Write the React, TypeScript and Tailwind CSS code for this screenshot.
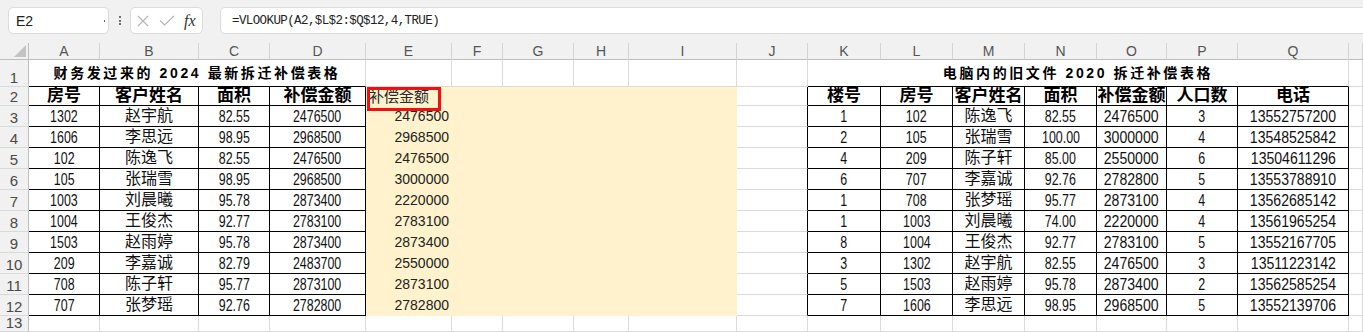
import React from 'react';

const left: string[][] = [
  ['1302', '赵宇航', '82.55', '2476500', '2476500'],
  ['1606', '李思远', '98.95', '2968500', '2968500'],
  ['102', '陈逸飞', '82.55', '2476500', '2476500'],
  ['105', '张瑞雪', '98.95', '2968500', '3000000'],
  ['1003', '刘晨曦', '95.78', '2873400', '2220000'],
  ['1004', '王俊杰', '92.77', '2783100', '2783100'],
  ['1503', '赵雨婷', '95.78', '2873400', '2873400'],
  ['209', '李嘉诚', '82.79', '2483700', '2550000'],
  ['708', '陈子轩', '95.77', '2873100', '2873100'],
  ['707', '张梦瑶', '92.76', '2782800', '2782800'],
];

const right: string[][] = [
  ['1', '102', '陈逸飞', '82.55', '2476500', '3', '13552757200'],
  ['2', '105', '张瑞雪', '100.00', '3000000', '4', '13548525842'],
  ['4', '209', '陈子轩', '85.00', '2550000', '6', '13504611296'],
  ['6', '707', '李嘉诚', '92.76', '2782800', '5', '13553788910'],
  ['1', '708', '张梦瑶', '95.77', '2873100', '4', '13562685142'],
  ['1', '1003', '刘晨曦', '74.00', '2220000', '4', '13561965254'],
  ['8', '1004', '王俊杰', '92.77', '2783100', '5', '13552167705'],
  ['3', '1302', '赵宇航', '82.55', '2476500', '3', '13511223142'],
  ['5', '1503', '赵雨婷', '95.78', '2873400', '2', '13562585254'],
  ['7', '1606', '李思远', '98.95', '2968500', '5', '13552139706'],
];

const letters = ['A', 'B', 'C', 'D', 'E', 'F', 'G', 'H', 'I', 'J', 'K', 'L', 'M', 'N', 'O', 'P', 'Q', ''];

const BR: Record<string, string> = { k: 'border-r-black', g: 'border-r-[#dadada]', y: 'border-r-[#fff2cc]' };
const BB: Record<string, string> = { k: 'border-b-black', g: 'border-b-[#dadada]', y: 'border-b-[#fff2cc]' };

function NumN({ v }: { v: string }) {
  return (
    <span className="inline-block scale-x-[0.73] font-['Liberation_Sans',Arial,sans-serif] text-[17px] leading-[17px] text-[#111]">
      {v}
    </span>
  );
}
function NumW({ v }: { v: string }) {
  return (
    <span className="inline-block scale-x-[0.88] font-['Liberation_Sans',Arial,sans-serif] text-[16px] leading-[17px] text-[#111]">
      {v}
    </span>
  );
}
function Name({ v }: { v: string }) {
  return (
    <span className="inline-block font-['Liberation_Sans','Noto_Sans_CJK_SC',sans-serif] text-[16px] leading-[18px] text-[#111]">
      {v}
    </span>
  );
}
function Head({ v }: { v: string }) {
  return (
    <span className="inline-block font-['Liberation_Sans','Noto_Sans_CJK_SC',sans-serif] font-bold text-[17px] leading-[18px] text-black">
      {v}
    </span>
  );
}

function cellBorders(r: number, c: number): [string, string, string] {
  if (r >= 2 && r <= 12) {
    if (c <= 4) return ['k', 'k', ''];
    if (c >= 5 && c <= 9) return ['y', 'y', 'bg-[#fff2cc]'];
    if (c === 10) return ['k', 'g', ''];
    if (c >= 11 && c <= 17) return ['k', 'k', ''];
    return ['g', 'g', ''];
  }
  return ['g', 'g', ''];
}

function content(r: number, c: number): React.ReactNode {
  if (r === 2) {
    const lh = ['房号', '客户姓名', '面积', '补偿金额'];
    const rh = ['楼号', '房号', '客户姓名', '面积', '补偿金额', '人口数', '电话'];
    if (c <= 4) return <Head v={lh[c - 1]} />;
    if (c >= 11 && c <= 17) return <Head v={rh[c - 11]} />;
    return null;
  }
  if (r >= 3 && r <= 12) {
    const L = left[r - 3];
    const R = right[r - 3];
    if (c === 1) return <NumN v={L[0]} />;
    if (c === 2) return <Name v={L[1]} />;
    if (c === 3) return <NumN v={L[2]} />;
    if (c === 4) return <NumN v={L[3]} />;
    if (c === 11) return <NumN v={R[0]} />;
    if (c === 12) return <NumN v={R[1]} />;
    if (c === 13) return <Name v={R[2]} />;
    if (c === 14) return <NumN v={R[3]} />;
    if (c === 15) return <NumW v={R[4]} />;
    if (c === 16) return <NumN v={R[5]} />;
    if (c === 17) return <NumW v={R[6]} />;
  }
  return null;
}

function RowHeader({ n }: { n: number }) {
  return (
    <div className="bg-[#f1f1f1] border-r border-b border-r-[#bdbdbd] border-b-[#d9d9d9] flex items-end justify-center pb-[1px]">
      <span className="font-['Liberation_Sans',Arial,sans-serif] text-[15px] leading-[15px] text-[#4a4a4a]">{n}</span>
    </div>
  );
}

export default function App() {
  const cells: React.ReactNode[] = [];

  cells.push(
    <div key="corner" className="bg-[#f1f1f1] border-r border-b border-r-[#bdbdbd] border-b-[#bdbdbd] relative">
      <svg className="absolute left-[14px] top-[2px]" width="12" height="12" viewBox="0 0 12 12">
        <polygon points="12,0 12,12 0,12" fill="#c4c4c4" />
      </svg>
    </div>
  );
  letters.forEach((l, i) => {
    cells.push(
      <div
        key={'h' + i}
        className="bg-[#f1f1f1] border-r border-b border-r-[#d4d4d4] border-b-[#bdbdbd] flex items-center justify-center"
      >
        <span className="font-['Liberation_Sans',Arial,sans-serif] text-[14px] leading-[14px] text-[#555]">{l}</span>
      </div>
    );
  });

  cells.push(<RowHeader key="rh1" n={1} />);
  cells.push(
    <div key="t1" className="col-span-4 border-r border-b border-r-[#dadada] border-b-black flex items-center justify-center">
      <span className="inline-block font-['Liberation_Sans','Noto_Sans_CJK_SC',sans-serif] font-bold text-[14px] tracking-[2.6px] leading-[16px] text-black whitespace-pre">
        财务发过来的 2024 最新拆迁补偿表格
      </span>
    </div>
  );
  for (let c = 5; c <= 10; c++) {
    cells.push(<div key={'r1c' + c} className="border-r border-b border-r-[#dadada] border-b-[#dadada]" />);
  }
  cells.push(
    <div key="t2" className="col-span-7 border-r border-b border-r-[#dadada] border-b-black flex items-center justify-center">
      <span className="inline-block font-['Liberation_Sans','Noto_Sans_CJK_SC',sans-serif] font-bold text-[14px] tracking-[2.6px] leading-[16px] text-black whitespace-pre">
        电脑内的旧文件 2020 拆迁补偿表格
      </span>
    </div>
  );
  cells.push(<div key="r1c18" className="border-r border-b border-r-[#dadada] border-b-[#dadada]" />);

  for (let r = 2; r <= 13; r++) {
    cells.push(<RowHeader key={'rh' + r} n={r} />);
    for (let c = 1; c <= 18; c++) {
      const [rb, bb, bg] = cellBorders(r, c);
      const base = `border-r border-b ${BR[rb]} ${BB[bb]} ${bg}`;
      if (r === 2 && c === 5) {
        cells.push(
          <div key={'c' + r + '-' + c} className={`${base} relative flex items-end justify-start pl-[3px]`}>
            <span className="inline-block font-['Liberation_Sans','Noto_Sans_CJK_SC',sans-serif] text-[15px] leading-[17px] text-[#2a2a2a]">
              补偿金额
            </span>
            <div className="absolute left-[1px] top-0 w-[74px] h-[24px] border-[3px] border-[#f01010] z-10" />
          </div>
        );
        continue;
      }
      if (r >= 3 && r <= 12 && c === 5) {
        cells.push(
          <div key={'c' + r + '-' + c} className={`${base} flex items-center justify-end pr-[2px]`}>
            <span className="inline-block font-['Liberation_Sans',Arial,sans-serif] text-[14px] leading-[16px] text-[#222]">
              {left[r - 3][4]}
            </span>
          </div>
        );
        continue;
      }
      cells.push(
        <div key={'c' + r + '-' + c} className={`${base} flex items-center justify-center whitespace-nowrap`}>
          {content(r, c)}
        </div>
      );
    }
  }

  return (
    <div lang="zh-CN" className="w-[1363px] h-[332px] overflow-hidden bg-white">
      <div className="h-[43px] bg-[#f1f1f1] flex items-start pt-[7px] pl-[8px] overflow-hidden">
        <div className="w-[101px] h-[27px] shrink-0 bg-white border border-[#dcdcdc] rounded-[5px] flex items-center pl-[7px] relative">
          <span className="font-['Liberation_Sans',Arial,sans-serif] text-[14px] leading-[14px] text-[#222]">E2</span>
          <span className="absolute right-[3px] top-[12px] w-[1px] h-[2px] bg-[#666]" />
        </div>
        <div className="w-[21px] h-[27px] shrink-0 flex flex-col items-center justify-center gap-[1.5px]">
          <span className="w-[2px] h-[2px] bg-[#444] rounded-full" />
          <span className="w-[2px] h-[2px] bg-[#444] rounded-full" />
          <span className="w-[2px] h-[2px] bg-[#444] rounded-full" />
        </div>
        <div className="w-[73px] h-[27px] shrink-0 bg-white border border-[#dcdcdc] rounded-[5px] flex items-center pl-[6px]">
          <svg width="12" height="12" viewBox="0 0 12 12" className="shrink-0">
            <path d="M1 1 L11 11 M11 1 L1 11" stroke="#b4b4b4" strokeWidth="1.1" fill="none" />
          </svg>
          <svg width="16" height="11" viewBox="0 0 16 11" className="shrink-0 ml-[10px]">
            <path d="M1 5.5 L5.5 10 L15 1" stroke="#b4b4b4" strokeWidth="1.1" fill="none" />
          </svg>
          <span className="ml-[9px] font-['Liberation_Serif',serif] italic text-[16px] leading-[16px] text-[#333]">fx</span>
        </div>
        <div className="ml-[17px] w-[1200px] h-[27px] shrink-0 bg-white border border-[#dcdcdc] rounded-[5px] flex items-center pl-[11px]">
          <span className="font-['Liberation_Mono',monospace] text-[12.5px] tracking-[-0.6px] leading-[14px] text-[#222]">
            =VLOOKUP(A2,$L$2:$Q$12,4,TRUE)
          </span>
        </div>
      </div>
      <div className="grid grid-cols-[29px_71px_99px_71px_96px_86px_51px_71px_55px_108px_71px_73px_72px_72px_72px_70px_71px_111px_14px] grid-rows-[17px_27px_19px_repeat(10,21px)_16px]">
        {cells}
      </div>
    </div>
  );
}
